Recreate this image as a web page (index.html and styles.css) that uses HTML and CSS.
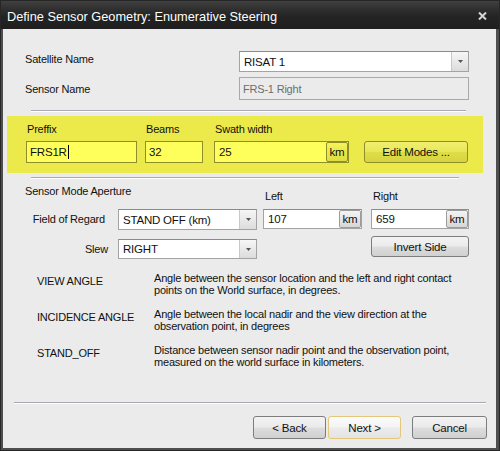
FILE: index.html
```html
<!DOCTYPE html>
<html>
<head>
<meta charset="utf-8">
<title>Define Sensor Geometry</title>
<link rel="stylesheet" href="styles.css">
</head>
<body>
<div class="window">
  <div class="titlebar">
    <span class="title">Define Sensor Geometry: Enumerative Steering</span>
    <svg class="close" width="9" height="8" viewBox="0 0 9 8"><path d="M1 0.5 L8 7.5 M8 0.5 L1 7.5" stroke="#d6d6d6" stroke-width="2"/></svg>
  </div>
  <div class="client">
    <div class="row row-sat">
      <span class="lbl lbl-top lbl-sat">Satellite Name</span>
      <div class="combo combo-wide">
        <span class="combo-text">RISAT 1</span>
        <span class="drop"><svg width="5" height="3" viewBox="0 0 5 3"><path d="M0 0 H5 L2.5 3 Z" fill="#555"/></svg></span>
      </div>
    </div>
    <div class="row row-sensor">
      <span class="lbl lbl-top">Sensor Name</span>
      <div class="textbox disabled">FRS-1 Right</div>
    </div>
    <div class="sep sep1"></div>

    <div class="band">
      <div class="bcol bcol-prefix">
        <span class="blbl">Preffix</span>
        <div class="ybox">FRS1R<span class="caret"></span></div>
      </div>
      <div class="bcol bcol-beams">
        <span class="blbl">Beams</span>
        <div class="ybox">32</div>
      </div>
      <div class="bcol bcol-swath">
        <span class="blbl">Swath width</span>
        <div class="ybox ybox-unit"><span class="val">25</span><span class="unit unit-y">km</span></div>
      </div>
      <div class="bcol bcol-edit">
        <button class="btn btn-yellow">Edit Modes ...</button>
      </div>
    </div>
    <div class="sep sep2"></div>

    <div class="ap-head">
      <span class="ap-title">Sensor Mode Aperture</span>
      <span class="ap-left">Left</span>
      <span class="ap-right">Right</span>
    </div>
    <div class="ap-row ap-for">
      <span class="ap-lbl lbl-for">Field of Regard</span>
      <div class="combo combo-small">
        <span class="combo-text">STAND OFF (km)</span>
        <span class="drop"><svg width="5" height="3" viewBox="0 0 5 3"><path d="M0 0 H5 L2.5 3 Z" fill="#555"/></svg></span>
      </div>
      <div class="wbox wbox-left"><span class="val">107</span><span class="unit">km</span></div>
      <div class="wbox wbox-right"><span class="val">659</span><span class="unit">km</span></div>
    </div>
    <div class="ap-row ap-slew">
      <span class="ap-lbl lbl-slew">Slew</span>
      <div class="combo combo-small combo-slew">
        <span class="combo-text">RIGHT</span>
        <span class="drop"><svg width="5" height="3" viewBox="0 0 5 3"><path d="M0 0 H5 L2.5 3 Z" fill="#555"/></svg></span>
      </div>
      <button class="btn btn-invert">Invert Side</button>
    </div>

    <div class="desc">
      <span class="d-term">VIEW ANGLE</span>
      <span class="d-text">Angle between the sensor location and the left and right contact<br>points on the World surface, in degrees.</span>
      <span class="d-term">INCIDENCE ANGLE</span>
      <span class="d-text">Angle between the local nadir and the view direction at the<br>observation point, in degrees</span>
      <span class="d-term">STAND_OFF</span>
      <span class="d-text">Distance between sensor nadir point and the observation point,<br>measured on the world surface in kilometers.</span>
    </div>

    <div class="sep sep3"></div>
    <div class="buttons">
      <button class="btn btn-back">&lt; Back</button>
      <button class="btn btn-next">Next &gt;</button>
      <button class="btn btn-cancel">Cancel</button>
    </div>
  </div>
</div>
</body>
</html>
```
FILE: styles.css
```css
* { box-sizing: border-box; }
html, body { margin: 0; padding: 0; }
body {
  width: 500px; height: 451px; overflow: hidden;
  font-family: "Liberation Sans", Arial, sans-serif;
  font-size: 11px; letter-spacing: -0.2px; color: #111;
  background: #3a3a3a;
}
.window {
  width: 500px; height: 451px;
  display: flex; flex-direction: column;
  background: #4e4e4e;
  border: 1px solid #262626;
}
.titlebar {
  height: 28px; flex: none;
  display: flex; align-items: center; justify-content: space-between;
  padding: 2px 12px 0 6px;
  background: linear-gradient(#404040 0, #303030 8px, #232323 16px, #1f1f1f 28px);
}
.title {
  color: #fff; font-size: 12.75px; letter-spacing: 0;
}
.close { display: block; margin-bottom: 1px; }
.client {
  flex: 1; margin: 0 3px 2px 2px;
  background: #ebebeb;
  display: flex; flex-direction: column;
}
.row { display: flex; align-items: center; padding-left: 22px; }
.lbl-top { width: 214px; }
.lbl-sat { margin-top: -6px; }
.row-sat { margin-top: 22px; height: 21px; }
.row-sensor { margin-top: 5px; height: 23px; }

.combo {
  display: flex; align-items: stretch;
  background: #fff;
  border: 1px solid #a3a3a3; border-top-color: #8a8a8a;
  height: 21px;
}
.combo-wide { width: 230px; }
.combo-text { flex: 1; padding-left: 4px; display: flex; align-items: center; font-size: 11.5px; }
.drop {
  width: 17px; flex: none;
  display: flex; align-items: center; justify-content: center;
  background: linear-gradient(#f6f6f6, #e9e9e9 50%, #dcdcdc);
  border-left: 1px solid #c9c9c9;
}
.drop svg { display: block; }
.textbox {
  width: 230px; height: 23px;
  display: flex; align-items: center; padding-left: 3px;
  border: 1px solid #a9a9a9;
}
.disabled { color: #6d6d6d; background: #ebebeb; }

.sep {
  height: 2px; flex: none;
  border-top: 1px solid #a9a9b5; border-bottom: 1px solid #fff;
}
.sep1 { margin: 10px 0 0 28px; width: 435px; }
.sep2 { margin: 4px 0 0 28px; width: 428px; }
.sep3 { margin: 34px 0 0 11px; width: 472px; }

.band {
  margin: 4px 0 0 4px; width: 476px; height: 57px; flex: none;
  background: #ebea4a;
  display: flex; align-items: flex-end;
  padding: 0 0 10px 19px;
}
.bcol { display: flex; flex-direction: column; }
.blbl { line-height: 13px; margin-bottom: 5px; padding-left: 1px; }
.bcol-prefix { width: 111px; }
.bcol-beams { width: 58px; margin-left: 8px; }
.bcol-swath { width: 135px; margin-left: 11px; }
.bcol-edit { width: 104px; margin-left: 15px; }
.ybox {
  height: 22px; display: flex; align-items: center;
  padding-left: 3px;
  background: #ffff5b;
  border: 1px solid #8f8d2c;
  font-size: 11.5px;
}
.caret { width: 1px; height: 14px; background: #000; margin-left: 1px; }
.ybox-unit { padding-left: 4px; padding-right: 0; }
.val { flex: 1; font-size: 11.5px; }
.unit {
  width: 22px; align-self: stretch;
  display: flex; align-items: center; justify-content: center;
  border: 1px solid #9c9c9c; border-radius: 2px;
  background: linear-gradient(#f3f3f3, #e6e6e6 50%, #d6d6d6);
  font-size: 11.5px;
}
.unit-y {
  background: linear-gradient(#f4f45c, #e8e84a 50%, #dede40);
  border-color: #8f8d2c;
}

.btn {
  font: inherit; color: #111; letter-spacing: -0.2px;
  border: 1px solid #7d7d7d; border-radius: 3px;
  background: linear-gradient(#f3f3f3 0, #ebebeb 48%, #dddddd 52%, #d0d0d0 100%);
  padding: 0; height: 23px;
  font-size: 11.5px;
}
.btn-yellow {
  width: 104px; height: 22px;
  border-color: #8f8d2c;
  background: linear-gradient(#f0ef70 0, #e8e757 48%, #dedd48 52%, #d6d540 100%);
}

.ap-head { display: flex; align-items: flex-start; margin-top: 6px; line-height: 13px; }
.ap-title { width: 262px; padding-left: 22px; }
.ap-left { width: 108px; margin-top: 5px; }
.ap-right { margin-top: 5px; }

.ap-row { display: flex; align-items: flex-start; }
.ap-for { margin-top: 6px; height: 21px; }
.ap-slew { margin-top: 6px; height: 21px; }
.ap-lbl { width: 115px; text-align: right; line-height: 21px; }
.lbl-for { padding-right: 13px; }
.lbl-slew { padding-right: 10px; margin-top: 3px; }
.combo-small { width: 139px; }
.combo-slew { height: 20px; margin-top: 3px; }
.wbox {
  height: 20px; display: flex; align-items: stretch;
  background: #fff;
  border: 1px solid #a3a3a3; border-top-color: #8a8a8a;
  padding-left: 4px;
}
.wbox .val { display: flex; align-items: center; }
.wbox-left { width: 99px; margin-left: 6px; }
.wbox-right { width: 98px; margin-left: 9px; }
.btn-invert { width: 98px; height: 21px; margin-left: 114px; }

.desc {
  display: grid; grid-template-columns: 117px auto;
  row-gap: 12px; margin-top: 15px; padding-left: 34px;
}
.d-term { margin-top: 3px; line-height: 13px; }
.d-text { line-height: 12px; white-space: nowrap; }

.buttons { display: flex; margin-top: 12px; padding-left: 250px; }
.btn-back { width: 73px; }
.btn-next {
  width: 73px; margin-left: 2px;
  border-color: #e3c77a;
  background: linear-gradient(#fbfbfb 0, #f4f4f4 48%, #ebebeb 52%, #e4e4e4 100%);
}
.btn-cancel { width: 75px; margin-left: 11px; }
```
